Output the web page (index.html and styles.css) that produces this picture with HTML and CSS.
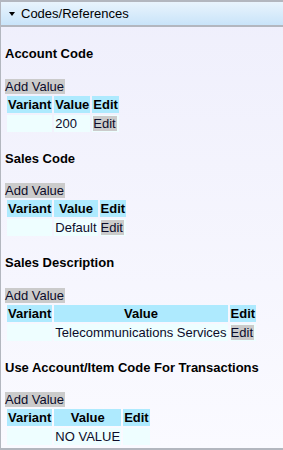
FILE: index.html
```html
<!DOCTYPE html>
<html lang="en">
<head>
    <meta charset="UTF-8">
    <title>Codes/References</title>
    <link rel="stylesheet" href="styles.css">
</head>
<body>
    <div class="panel">
        <div class="panelHead"><span class="arrow"></span>Codes/References</div>
        <div class="panelBody">
            <h4>Account Code</h4>
            <div class="addRow"><span class="btn">Add Value</span></div>
            <table class="codes">
                <tr><th>Variant</th><th>Value</th><th>Edit</th></tr>
                <tr><td></td><td>200</td><td><span class="btn">Edit</span></td></tr>
            </table>

            <h4>Sales Code</h4>
            <div class="addRow"><span class="btn">Add Value</span></div>
            <table class="codes">
                <tr><th>Variant</th><th>Value</th><th>Edit</th></tr>
                <tr><td></td><td>Default</td><td><span class="btn">Edit</span></td></tr>
            </table>

            <h4>Sales Description</h4>
            <div class="addRow"><span class="btn">Add Value</span></div>
            <table class="codes">
                <tr><th>Variant</th><th>Value</th><th>Edit</th></tr>
                <tr><td></td><td>Telecommunications Services</td><td><span class="btn">Edit</span></td></tr>
            </table>

            <h4>Use Account/Item Code For Transactions</h4>
            <div class="addRow"><span class="btn">Add Value</span></div>
            <table class="codes">
                <tr><th>Variant</th><th>Value</th><th>Edit</th></tr>
                <tr><td></td><td>NO VALUE</td><td></td></tr>
            </table>
        </div>
    </div>
</body>
</html>
```

FILE: styles.css
```css
*{box-sizing: border-box;}
body{margin: 0;font-family: "Liberation Sans", Arial, sans-serif;font-size: 13px;color: #0c0c2a;}
.panel{height: 450px;border-left: 1px solid #b3b7bf;border-bottom: 2px solid #b3b7bf;
background: linear-gradient(#efeffc, #fafaff);overflow: hidden;}
.panelHead{border-top: 2px solid #b3b7bf;border-bottom: 2px solid #b3b7bf;padding: 4px 0 4px 8px;
background: linear-gradient(#e9f4fd, #c9e4f9);color: #000;line-height: 15px;}
.arrow{display: inline-block;width: 0;height: 0;border-left: 3px solid transparent;border-right: 3px solid transparent;
border-top: 4px solid #000;margin-right: 6px;vertical-align: 2px;}
.panelBody{padding: 2px 4px 0;}
.panelBody h4{margin: 1.33em 0;font-size: 13px;color: #000;}
.btn{background: #cbcbcb;padding: 0 1px 0 0;color: #0c0c2a;}
.codes{border-spacing: 2px;}
.codes th{background: #aeeafe;padding: 1px;font-weight: bold;color: #000;}
.codes td{background: #eefeff;padding: 1px;text-align: left;}
```
